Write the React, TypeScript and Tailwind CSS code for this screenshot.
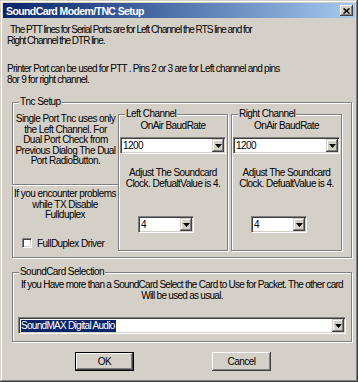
import React from "react";

const ui = "font-['Liberation_Sans',Arial,sans-serif]";

function Group({
  label,
  className,
  children,
}: {
  label?: string;
  className?: string;
  children?: React.ReactNode;
}) {
  return (
    <div
      className={`relative border border-[#808080] shadow-[1px_1px_0_#fff,inset_1px_1px_0_#fff] ${className ?? ""}`}
    >
      {label && (
        <span className="absolute -top-[7px] left-[6px] bg-[#d4d0c8] px-[1px] leading-[12px]">
          {label}
        </span>
      )}
      {children}
    </div>
  );
}

function Arrow() {
  return (
    <svg width="7" height="4" viewBox="0 0 7 4" className="block">
      <path d="M0 0h7L3.5 4z" fill="#000" />
    </svg>
  );
}

function Combo({
  value,
  className,
  selected,
}: {
  value: string;
  className?: string;
  selected?: boolean;
}) {
  return (
    <div
      className={`flex h-[17px] items-stretch border border-t-[#808080] border-l-[#808080] border-r-white border-b-white bg-white shadow-[inset_1px_1px_0_#404040,inset_-1px_-1px_0_#d4d0c8] p-[1px] ${className ?? ""}`}
    >
      <div className="flex flex-1 items-center overflow-hidden pl-[1px]">
        <span
          className={`leading-[12px] ${selected ? "bg-[#0a246a] pr-[1px] text-white tracking-[-0.7px]" : ""}`}
        >
          {value}
        </span>
      </div>
      <div className="flex w-[12px] items-center justify-center bg-[#d4d0c8] shadow-[inset_-1px_-1px_0_#404040,inset_1px_1px_0_#d4d0c8,inset_-2px_-2px_0_#808080,inset_2px_2px_0_#fff]">
        <Arrow />
      </div>
    </div>
  );
}

function Channel({ label, className }: { label: string; className?: string }) {
  return (
    <Group label={label} className={`h-[137px] ${className ?? ""}`}>
      <div className="flex flex-col pt-[5px]">
        <p className="text-center leading-[11px]">OnAir BaudRate</p>
        <Combo value="1200" className="mx-[1px] mt-[6px]" />
        <p className="mt-[13px] text-center leading-[11px]">
          Adjust The Soundcard
          <br />
          Clock. DefualtValue is 4.
        </p>
        <Combo value="4" className="ml-[19px] mt-[27px] w-[56px]" />
      </div>
    </Group>
  );
}

function Button({ children, primary }: { children: React.ReactNode; primary?: boolean }) {
  return (
    <button
      type="button"
      className={`h-[19px] w-[59px] bg-[#d4d0c8] leading-[12px] ${
        primary
          ? "border border-black shadow-[inset_-1px_-1px_0_#404040,inset_1px_1px_0_#fff,inset_-2px_-2px_0_#808080]"
          : "shadow-[inset_-1px_-1px_0_#404040,inset_1px_1px_0_#fff,inset_-2px_-2px_0_#808080]"
      }`}
    >
      {children}
    </button>
  );
}

export default function App() {
  return (
    <div
      className={`${ui} flex h-[382px] w-[358px] flex-col whitespace-nowrap bg-[#d4d0c8] p-[3px] text-[10px] tracking-[-0.55px] text-black shadow-[inset_-1px_-1px_0_#404040,inset_1px_1px_0_#d4d0c8,inset_-2px_-2px_0_#808080,inset_2px_2px_0_#fff]`}
    >
      {/* title bar */}
      <div className="flex h-[15px] items-center justify-between bg-gradient-to-r from-[#0a246a] to-[#a6caf0] pl-[3px] pr-[2px]">
        <span className="text-[10.5px] font-bold leading-[12px] tracking-[-0.6px] text-white">
          SoundCard Modem/TNC Setup
        </span>
        <div className="flex h-[11px] w-[13px] items-center justify-center bg-[#d4d0c8] shadow-[inset_-1px_-1px_0_#404040,inset_1px_1px_0_#fff,inset_-2px_-2px_0_#808080]">
          <svg width="7" height="6" viewBox="0 0 7 6" className="block">
            <path d="M0.5 0.5L6.5 5.5M6.5 0.5L0.5 5.5" stroke="#000" strokeWidth="1.6" />
          </svg>
        </div>
      </div>

      <p className="ml-[4px] mt-[6px] indent-[3px] leading-[11px] tracking-[-1px]">
        The PTT lines for Serial Ports are for Left Channel the RTS line and for
        <br />
        Right Channel the DTR line.
      </p>
      <p className="ml-[4px] mt-[17px] leading-[11px] tracking-[-0.75px]">
        Printer Port can be used for PTT . Pins 2 or 3 are for Left channel and pins
        <br />
        8or 9 for right channel.
      </p>

      <Group label="Tnc Setup" className="ml-[9px] mt-[17px] h-[156px] w-[340px]">
        <div className="flex">
          <div className="flex w-[105px] flex-col">
            <div className="h-[81px] pt-[11px] text-center leading-[10.5px]">
              Single Port Tnc uses only
              <br />
              the Left Channel. For
              <br />
              Dual Port Check from
              <br />
              Previous Dialog The Dual
              <br />
              Port RadioButton.
            </div>
            <div className="-ml-[1px] border-t border-[#808080] shadow-[inset_0_1px_0_#fff]">
              <p className="pt-[4px] text-center leading-[10.5px]">
                If you encounter problems
                <br />
                while TX Disable
                <br />
                Fullduplex
              </p>
              <div className="ml-[10px] mt-[17px] flex items-center gap-[5px]">
                <div className="h-[10px] w-[10px] border border-t-[#808080] border-l-[#808080] border-r-white border-b-white bg-white shadow-[inset_1px_1px_0_#404040,inset_-1px_-1px_0_#d4d0c8]" />
                <span className="leading-[11px]">FullDuplex Driver</span>
              </div>
            </div>
          </div>
          <Channel label="Left Channel" className="mt-[11px] w-[110px]" />
          <Channel label="Right Channel" className="ml-[3px] mt-[11px] w-[111px]" />
        </div>
      </Group>

      <Group label="SoundCard Selection" className="ml-[9px] mt-[14px] h-[70px] w-[340px]">
        <p className="pt-[6px] text-center leading-[11px] tracking-[-0.72px]">
          If you Have more than a SoundCard Select the Card to Use for Packet. The other card
          <br />
          Will be used as usual.
        </p>
        <Combo
          value="SoundMAX Digital Audio"
          selected
          className="ml-[5px] mr-[5px] mt-[16px]"
        />
      </Group>

      <div className="ml-[72px] mt-[10px] flex gap-[78px]">
        <Button primary>OK</Button>
        <Button>Cancel</Button>
      </div>
    </div>
  );
}
